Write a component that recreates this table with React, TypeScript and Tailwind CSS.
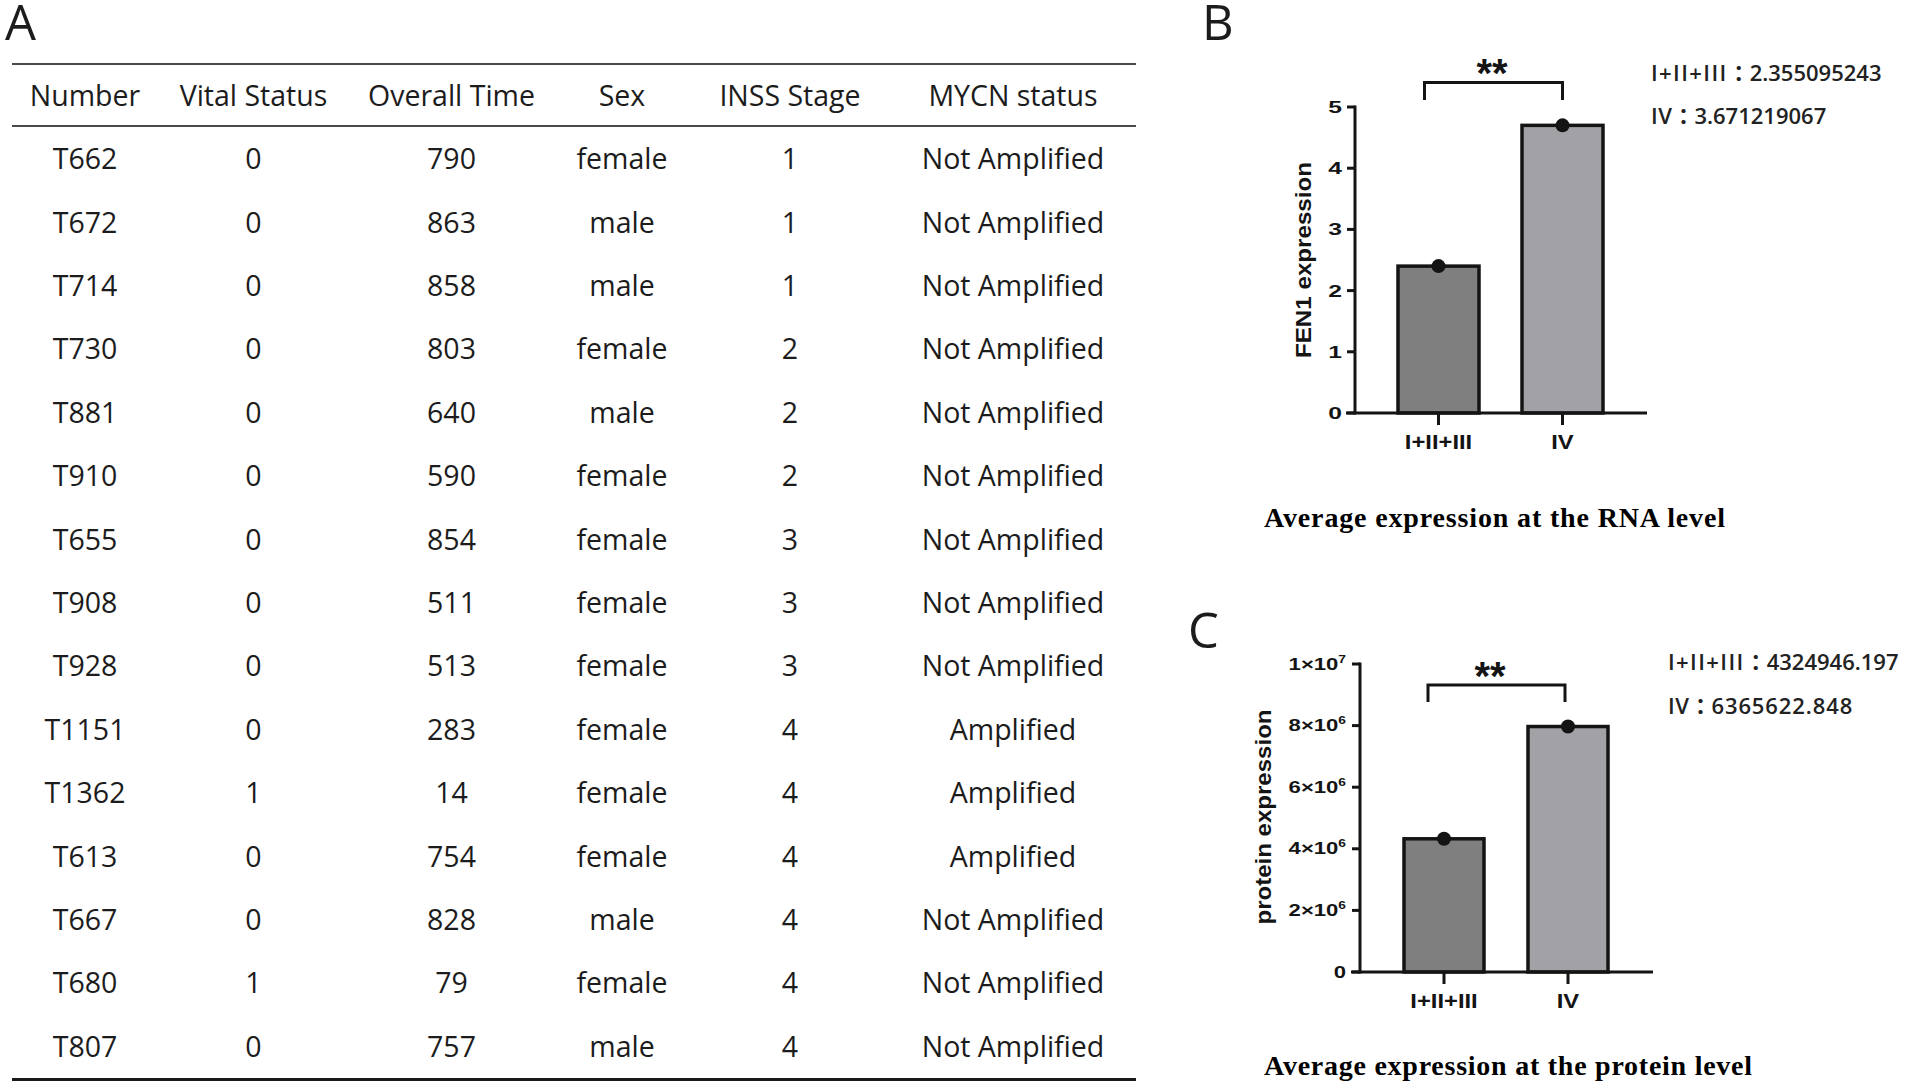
import React from "react";

const rows: string[][] = [
  ["T662", "0", "790", "female", "1", "Not Amplified"],
  ["T672", "0", "863", "male", "1", "Not Amplified"],
  ["T714", "0", "858", "male", "1", "Not Amplified"],
  ["T730", "0", "803", "female", "2", "Not Amplified"],
  ["T881", "0", "640", "male", "2", "Not Amplified"],
  ["T910", "0", "590", "female", "2", "Not Amplified"],
  ["T655", "0", "854", "female", "3", "Not Amplified"],
  ["T908", "0", "511", "female", "3", "Not Amplified"],
  ["T928", "0", "513", "female", "3", "Not Amplified"],
  ["T1151", "0", "283", "female", "4", "Amplified"],
  ["T1362", "1", "14", "female", "4", "Amplified"],
  ["T613", "0", "754", "female", "4", "Amplified"],
  ["T667", "0", "828", "male", "4", "Not Amplified"],
  ["T680", "1", "79", "female", "4", "Not Amplified"],
  ["T807", "0", "757", "male", "4", "Not Amplified"],
];

const headers = ["Number", "Vital Status", "Overall Time", "Sex", "INSS Stage", "MYCN status"];
const colW = ["w-[146px]", "w-[191px]", "w-[205px]", "w-[136px]", "w-[200px]", "w-[246px]"];

const SVG_FONT = "'Liberation Sans', Arial, Helvetica, sans-serif";
const INK = "#141414";

function Cell({ i, children }: { i: number; children: React.ReactNode }) {
  return (
    <div className={`${colW[i]} flex shrink-0 justify-center whitespace-nowrap`}>{children}</div>
  );
}

function ChartB() {
  const base = 373;
  const y = (v: number) => base - v * 61.2;
  const ticks = [0, 1, 2, 3, 4, 5];
  return (
    <svg
      width={371}
      height={420}
      viewBox="0 0 371 420"
      className="mt-[40px] shrink-0"
      fontFamily={SVG_FONT}
      fontWeight="bold"
      fill={INK}
    >
      <rect x={118} y={y(2.4)} width={81} height={base - y(2.4)} fill="#7f7f7f" stroke={INK} strokeWidth={3.5} />
      <rect x={242} y={y(4.7)} width={81} height={base - y(4.7)} fill="#a2a2a6" stroke={INK} strokeWidth={3.5} />
      <line x1={75} y1={y(5) - 1.5} x2={75} y2={base + 1.5} stroke={INK} strokeWidth={3} />
      <line x1={66} y1={base} x2={367} y2={base} stroke={INK} strokeWidth={3} />
      {ticks.map((t) => (
        <g key={t}>
          <line x1={67} y1={y(t)} x2={75} y2={y(t)} stroke={INK} strokeWidth={3} />
          <text transform={`translate(62 ${y(t) + 6}) scale(1.45 1)`} textAnchor="end" fontSize={17}>
            {t}
          </text>
        </g>
      ))}
      <line x1={158.5} y1={base} x2={158.5} y2={base + 12} stroke={INK} strokeWidth={3} />
      <line x1={282.5} y1={base} x2={282.5} y2={base + 12} stroke={INK} strokeWidth={3} />
      <circle cx={158.5} cy={y(2.4)} r={7} fill={INK} />
      <circle cx={282.5} cy={y(4.7)} r={7} fill={INK} />
      <text transform={`translate(158.5 ${base + 36}) scale(1.22 1)`} textAnchor="middle" fontSize={19.5}>
        I+II+III
      </text>
      <text transform={`translate(282.5 ${base + 36}) scale(1.22 1)`} textAnchor="middle" fontSize={19.5}>
        IV
      </text>
      <path d="M144.5 60 V42.5 H282.5 V60" fill="none" stroke={INK} strokeWidth={3} />
      <text x={212} y={47} textAnchor="middle" fontSize={40}>
        **
      </text>
      <text
        transform="translate(30.5 220) rotate(-90)"
        textAnchor="middle"
        fontSize={22}
        textLength={196}
        lengthAdjust="spacingAndGlyphs"
      >
        FEN1 expression
      </text>
    </svg>
  );
}

function ChartC() {
  const base = 332;
  const y = (v: number) => base - v * 30.8;
  const ticks: [number, string, string][] = [
    [0, "0", ""],
    [2, "2×10", "6"],
    [4, "4×10", "6"],
    [6, "6×10", "6"],
    [8, "8×10", "6"],
    [10, "1×10", "7"],
  ];
  return (
    <svg
      width={425}
      height={380}
      viewBox="0 0 425 380"
      className="mt-[80px] shrink-0"
      fontFamily={SVG_FONT}
      fontWeight="bold"
      fill={INK}
    >
      <rect x={164} y={y(4.3249)} width={80} height={base - y(4.3249)} fill="#7f7f7f" stroke={INK} strokeWidth={3.5} />
      <rect x={288} y={y(7.97)} width={80} height={base - y(7.97)} fill="#a2a2a6" stroke={INK} strokeWidth={3.5} />
      <line x1={120} y1={y(10) - 1.5} x2={120} y2={base + 1.5} stroke={INK} strokeWidth={3} />
      <line x1={111} y1={base} x2={413} y2={base} stroke={INK} strokeWidth={3} />
      {ticks.map(([v, m, e]) => (
        <g key={v}>
          <line x1={112} y1={y(v)} x2={120} y2={y(v)} stroke={INK} strokeWidth={3} />
          <text transform={`translate(106 ${y(v) + 5.5}) scale(1.38 1)`} textAnchor="end" fontSize={16}>
            {m}
            {e ? (
              <tspan fontSize={10} dy={-7}>
                {e}
              </tspan>
            ) : null}
          </text>
        </g>
      ))}
      <line x1={204} y1={base} x2={204} y2={base + 12} stroke={INK} strokeWidth={3} />
      <line x1={328} y1={base} x2={328} y2={base + 12} stroke={INK} strokeWidth={3} />
      <circle cx={204} cy={y(4.3249)} r={7} fill={INK} />
      <circle cx={328} cy={y(7.97)} r={7} fill={INK} />
      <text transform={`translate(204 ${base + 36}) scale(1.22 1)`} textAnchor="middle" fontSize={19.5}>
        I+II+III
      </text>
      <text transform={`translate(328 ${base + 36}) scale(1.22 1)`} textAnchor="middle" fontSize={19.5}>
        IV
      </text>
      <path d="M188 62 V45 H325 V62" fill="none" stroke={INK} strokeWidth={3} />
      <text x={250} y={50} textAnchor="middle" fontSize={40}>
        **
      </text>
      <text
        transform="translate(31 177) rotate(-90)"
        textAnchor="middle"
        fontSize={22}
        textLength={215}
        lengthAdjust="spacingAndGlyphs"
      >
        protein expression
      </text>
    </svg>
  );
}

function SideLine({ label, value, wide }: { label: string; value: string; wide?: boolean }) {
  return (
    <div className="whitespace-nowrap">
      <span className={label.length > 2 ? "tracking-[1.4px]" : "tracking-[0.5px]"}>{label}</span>
      <span className="font-['Noto_Sans_CJK_TC',sans-serif]">：</span>
      <span className={wide ? "tracking-[0.9px]" : ""}>{value}</span>
    </div>
  );
}

export default function App() {
  return (
    <div className="flex h-[1087px] w-[1906px] overflow-hidden bg-white font-['Open_Sans','Noto_Sans_CJK_SC',sans-serif] text-[#1c1c1c]">
      {/* Panel A */}
      <section className="flex w-[1180px] shrink-0 flex-col">
        <div className="pl-[5px] text-[49px] leading-[42px]">A</div>
        <div className="ml-[12px] mt-[21px] w-[1124px] border-t-2 border-b-[3px] border-t-[#4a4a4a] border-b-[#1a1a1a] text-[28.5px]">
          <div className="flex h-[62px] items-center border-b-2 border-[#4a4a4a]">
            {headers.map((h, i) => (
              <Cell key={h} i={i}>
                {h}
              </Cell>
            ))}
          </div>
          {rows.map((r) => (
            <div key={r[0]} className="flex h-[63.4px] items-center">
              {r.map((c, i) => (
                <Cell key={i} i={i}>
                  {c}
                </Cell>
              ))}
            </div>
          ))}
        </div>
      </section>

      {/* Panels B and C */}
      <section className="flex w-[726px] shrink-0 flex-col">
        <div className="flex h-[560px] flex-col">
          <div className="flex">
            <div className="w-[100px] shrink-0">
              <div className="ml-[22px] text-[49px] leading-[42px]">B</div>
            </div>
            <ChartB />
            <div className="mt-[50px] text-[22px] font-semibold leading-[42px] text-[#222]">
              <SideLine label="I+II+III" value="2.355095243" />
              <SideLine label="IV" value="3.671219067" />
            </div>
          </div>
          <div className="ml-[84px] mt-[42px] whitespace-nowrap font-['Liberation_Serif','Times_New_Roman',serif] text-[28px] font-bold leading-[32px] tracking-[0.85px] text-black">
            Average expression at the RNA level
          </div>
        </div>
        <div className="flex flex-col">
          <div className="flex">
            <div className="w-[60px] shrink-0">
              <div className="ml-[8px] mt-[48px] text-[49px] leading-[42px]">C</div>
            </div>
            <ChartC />
            <div className="ml-[3px] mt-[79px] text-[22px] font-semibold leading-[43px] text-[#222]">
              <SideLine label="I+II+III" value="4324946.197" />
              <SideLine label="IV" value="6365622.848" wide />
            </div>
          </div>
          <div className="ml-[84px] mt-[30px] whitespace-nowrap font-['Liberation_Serif','Times_New_Roman',serif] text-[28px] font-bold leading-[32px] tracking-[0.75px] text-black">
            Average expression at the protein level
          </div>
        </div>
      </section>
    </div>
  );
}
